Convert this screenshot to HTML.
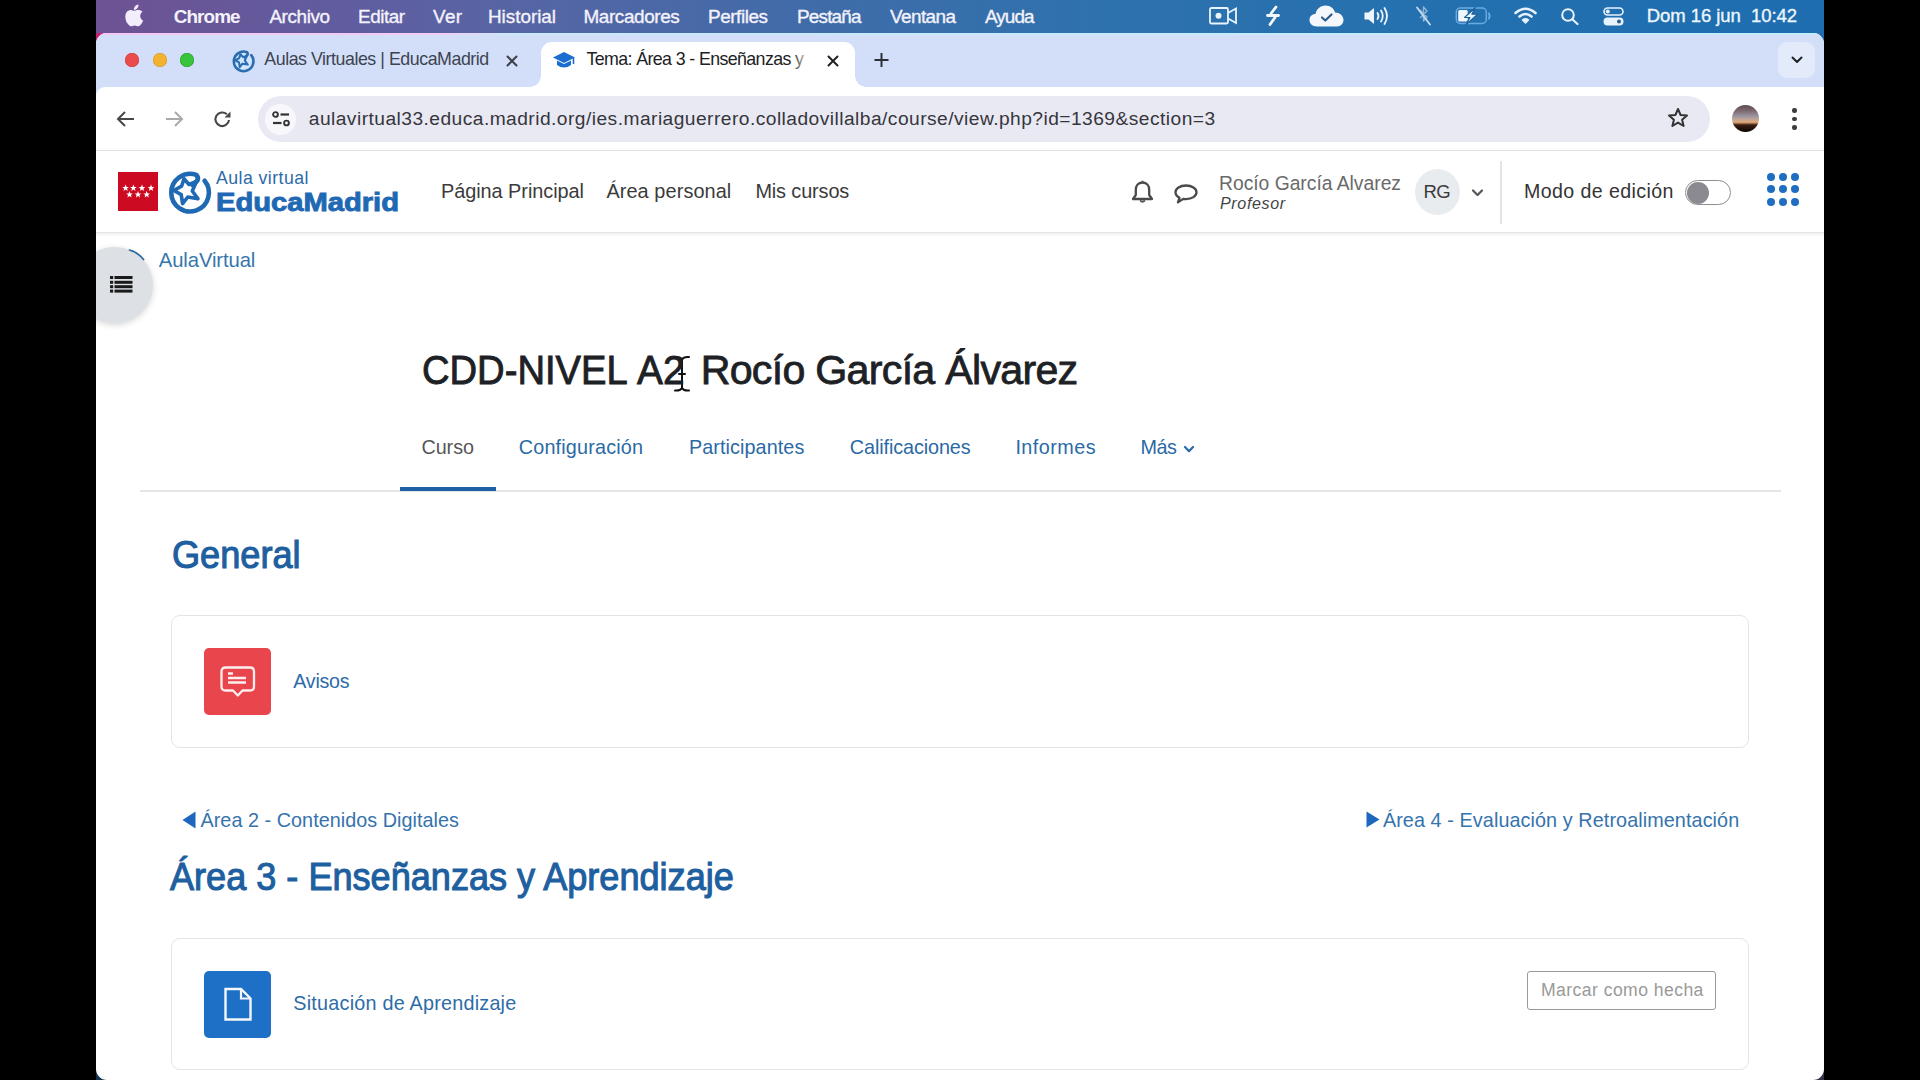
<!DOCTYPE html>
<html><head><meta charset="utf-8"><title>Moodle</title>
<style>
html,body{margin:0;padding:0;}
body{width:1920px;height:1080px;overflow:hidden;background:#000;position:relative;font-family:"Liberation Sans",sans-serif;}
.t{position:absolute;white-space:nowrap;}
.a{position:absolute;}

.dot{position:absolute;border-radius:50%;}
svg{position:absolute;overflow:visible;}

</style></head><body>
<div class="a" style="left:96px;top:0;width:1728px;height:33px;background:linear-gradient(90deg,#6e5293 0%,#5f5da0 15%,#5864a4 23%,#3f6ca9 42%,#2e72ad 58%,#2370af 80%,#1d6db0 100%);"></div>
<div class="a" style="left:96px;top:33px;width:14px;height:14px;background:#c2216a;"></div>
<div class="a" style="left:1810px;top:33px;width:14px;height:14px;background:#1f6aac;"></div>
<div class="a" style="left:96px;top:1062px;width:18px;height:18px;background:#15324c;"></div>
<div class="a" style="left:1806px;top:1062px;width:18px;height:18px;background:#37334d;"></div>
<div class="a" style="left:96px;top:33px;width:1728px;height:1047px;border-radius:11px;background:#fff;overflow:hidden;"><div class="a" style="left:0;top:0;width:1728px;height:64px;background:#d3dff9;"></div><div class="a" style="left:0;top:54px;width:1728px;height:70px;background:#fff;border-top-left-radius:9px;"></div><div class="a" style="left:0;top:0;width:1728px;height:2px;background:linear-gradient(90deg,#f4c8f4 0%,#f2cdf5 20%,#c9e9fb 24%,#c3ecfb 100%);"></div><div class="a" style="left:0;top:117px;width:1728px;height:1px;background:#e2e2e4;"></div><div class="a" style="left:0;top:199px;width:1728px;height:1px;background:#e4e4e4;"></div><div class="a" style="left:0;top:200px;width:1728px;height:3px;background:linear-gradient(#f0f0f0,#fcfcfc);"></div></div>
<svg style="left:125.5px;top:3.5px" width="18" height="22" viewBox="0 0 19 23"><path fill="#f3eefc" d="M13.2 0.5c0.2 1.5-0.4 3-1.3 4-0.9 1-2.3 1.8-3.6 1.7-0.2-1.5 0.5-3 1.3-3.9 0.9-1 2.4-1.7 3.6-1.8zM17.6 8.1c-0.2 0.1-2.7 1.5-2.6 4.5 0 3.5 3.1 4.7 3.1 4.7-0.1 0.2-0.5 1.7-1.6 3.3-1 1.4-2 2.8-3.6 2.8-1.6 0-2-0.9-3.8-0.9-1.8 0-2.3 0.9-3.7 1-1.5 0.1-2.7-1.5-3.7-2.9C-0.3 17.8-1.8 12.6 0.3 9c1-1.8 2.9-2.9 4.9-2.9 1.5 0 3 1 3.9 1 0.9 0 2.5-1.2 4.2-1 0.7 0 2.7 0.3 4.3 2z"/></svg>
<svg style="left:1209px;top:7px" width="29" height="18" viewBox="0 0 29 18"><rect x="1" y="1" width="18" height="15.5" rx="1.5" fill="none" stroke="#e9f4fd" stroke-width="1.8"/><circle cx="9.5" cy="8.8" r="3" fill="#e9f4fd"/><path d="M19 6 L27 1.5 V16 L19 11.5" fill="none" stroke="#e9f4fd" stroke-width="1.8"/></svg>
<svg style="left:1265px;top:5px" width="16" height="22" viewBox="0 0 16 22"><path d="M11 2 L6 8.5 M2.5 10.5 H13.5 M10 12.5 L5 19.5" fill="none" stroke="#f2f8fe" stroke-width="2.8" stroke-linecap="round"/></svg>
<svg style="left:1309px;top:5px" width="35" height="22" viewBox="0 0 35 22"><path fill="#f4f7fb" d="M8 21.5 C3 21.5 0.5 18.5 0.5 15 C0.5 11.5 3 9 6.5 9 C7.5 4 11.5 0.5 16.5 0.5 C21.5 0.5 25 3.5 26 7.5 C30.5 7.5 34.5 10.5 34.5 15 C34.5 18.5 32 21.5 28 21.5 Z"/><path d="M13 12.5 L16.3 15.5 L22.5 9.5" fill="none" stroke="#2a5d8c" stroke-width="2.2" stroke-linecap="round" stroke-linejoin="round"/></svg>
<svg style="left:1364px;top:7px" width="27" height="18" viewBox="0 0 27 18"><path fill="#eef5fc" d="M0.5 5.5 H4.5 L10 1 V17 L4.5 12.5 H0.5 Z"/><path d="M13.5 6 Q15.5 9 13.5 12 M17 3.5 Q20.5 9 17 14.5 M20.5 1 Q25.5 9 20.5 17" fill="none" stroke="#eef5fc" stroke-width="1.8" stroke-linecap="round"/></svg>
<svg style="left:1416px;top:6px" width="15" height="20" viewBox="0 0 15 20"><path d="M4 4 L11 11 L7.5 15 V1 L11 5 L4 12" fill="none" stroke="#8fb6da" stroke-width="1.4" stroke-linejoin="round"/><path d="M1 1.5 L14 18.5" stroke="#c9ddef" stroke-width="1.8" stroke-linecap="round"/></svg>
<svg style="left:1455px;top:7px" width="36" height="18" viewBox="0 0 36 18"><rect x="1.3" y="1" width="30" height="15.5" rx="4" fill="none" stroke="#68aae2" stroke-width="1.5"/><path d="M34 6.5 Q35.3 9 34 11.5" fill="none" stroke="#68aae2" stroke-width="2" stroke-linecap="round"/><rect x="3.2" y="3" width="9.5" height="11.5" rx="1.5" fill="#eef6fd"/><path d="M20.5 0.5 L9.5 10.5 H15 L11 17.5 L22.5 7.3 H16.8 Z" fill="#e9f6fd" stroke="#1b5f96" stroke-width="1.1" stroke-linejoin="round"/></svg>
<svg style="left:1514px;top:7px" width="23" height="17" viewBox="0 0 23 17"><path d="M1.5 6 Q11.5 -2.5 21.5 6" fill="none" stroke="#e7f2fc" stroke-width="2.6" stroke-linecap="round"/><path d="M5.5 9.5 Q11.5 4.5 17.5 9.5" fill="none" stroke="#e7f2fc" stroke-width="2.6" stroke-linecap="round"/><path d="M8.5 13 Q11.5 10.5 14.5 13 L11.5 16 Z" fill="#e7f2fc" stroke="#e7f2fc" stroke-width="1.5" stroke-linejoin="round"/></svg>
<svg style="left:1561px;top:8px" width="19" height="17" viewBox="0 0 19 17"><circle cx="7" cy="7" r="5.8" fill="none" stroke="#e7f2fc" stroke-width="2"/><path d="M11.3 11.3 L16.5 16" stroke="#e7f2fc" stroke-width="2.2" stroke-linecap="round"/></svg>
<svg style="left:1603px;top:7px" width="21" height="19" viewBox="0 0 21 19"><rect x="1" y="1" width="19" height="7" rx="3.5" fill="none" stroke="#e7f2fc" stroke-width="1.6"/><circle cx="4.8" cy="4.5" r="2" fill="#e7f2fc"/><rect x="0.5" y="10.5" width="20" height="8" rx="4" fill="#e7f2fc"/><circle cx="16" cy="14.5" r="2" fill="#2b5f90"/></svg>
<div class="dot" style="left:125px;top:53px;width:14px;height:14px;background:#ec4b4d;box-shadow:inset 0 0 0 0.6px #c63c3c;"></div>
<div class="dot" style="left:152.5px;top:53px;width:14px;height:14px;background:#f2b22f;box-shadow:inset 0 0 0 0.6px #d69a2a;"></div>
<div class="dot" style="left:180px;top:53px;width:14px;height:14px;background:#38c43d;box-shadow:inset 0 0 0 0.6px #2a9f30;"></div>
<svg style="left:227.5px;top:47px" width="28.6" height="27.6" viewBox="0 0 55 53"><circle cx="27.5" cy="26.5" r="17" fill="#cfe6fb"/><path d="M44.6 15.7 A18.8 18.8 0 1 1 36.3 9.9 Q39.5 13.5 36.5 16.5 L32.5 20" fill="none" stroke="#2a6db0" stroke-width="5" stroke-linecap="round"/><path d="M24 13.8 L29 19.5 L36.5 16.5 L32.3 26 L38 33.8 L27.8 32 L22.6 38.6 L21.2 29.6 L13.8 25.5 L21.6 21.2 Z" fill="none" stroke="#2a6db0" stroke-width="4" stroke-linejoin="round"/></svg>
<svg style="left:506px;top:55px" width="12" height="12" viewBox="0 0 12 12"><path d="M1.5 1.5 L10.5 10.5 M10.5 1.5 L1.5 10.5" stroke="#3b3f48" stroke-width="2" stroke-linecap="round"/></svg>
<div class="a" style="left:541px;top:42px;width:314px;height:46px;background:#fff;border-radius:11px 11px 0 0;"></div>
<div class="a" style="left:530px;top:76px;width:11px;height:11px;background:radial-gradient(circle at 0 0,transparent 10.5px,#fff 11px);"></div>
<div class="a" style="left:855px;top:76px;width:11px;height:11px;background:radial-gradient(circle at 100% 0,transparent 10.5px,#fff 11px);"></div>
<svg style="left:552px;top:51px" width="24" height="19" viewBox="0 0 24 19"><path d="M12 1 L23 6.5 L12 12 L1 6.5 Z" fill="#1c6dd0"/><path d="M5 9.5 V14 Q12 19 19 14 V9.5 L12 13 Z" fill="#1c6dd0"/><path d="M21.5 7 V13" stroke="#1c6dd0" stroke-width="1.6"/></svg>
<div class="a" style="left:792px;top:48px;width:22px;height:28px;background:linear-gradient(90deg,rgba(255,255,255,0),#fff 85%);z-index:5;"></div>
<svg style="left:827px;top:55px" width="12" height="12" viewBox="0 0 12 12"><path d="M1.5 1.5 L10.5 10.5 M10.5 1.5 L1.5 10.5" stroke="#202124" stroke-width="2" stroke-linecap="round"/></svg>
<svg style="left:874px;top:52px" width="15" height="16" viewBox="0 0 15 16"><path d="M7.5 1 V15 M0.5 8 H14.5" stroke="#2d3038" stroke-width="2"/></svg>
<div class="a" style="left:1778px;top:42px;width:37px;height:36px;border-radius:9px;background:#e3ebfb;"></div>
<svg style="left:1791px;top:56px" width="12" height="8" viewBox="0 0 12 8"><path d="M1.5 1.5 L6 6 L10.5 1.5" fill="none" stroke="#202124" stroke-width="2" stroke-linecap="round" stroke-linejoin="round"/></svg>
<svg style="left:116px;top:110px" width="19" height="18" viewBox="0 0 19 18"><path d="M18 9 H2.5 M9 2 L2 9 L9 16" fill="none" stroke="#474747" stroke-width="2"/></svg>
<svg style="left:165px;top:110px" width="19" height="18" viewBox="0 0 19 18"><path d="M1 9 H16.5 M10 2 L17 9 L10 16" fill="none" stroke="#a9a9ab" stroke-width="2"/></svg>
<svg style="left:213px;top:110px" width="20" height="19" viewBox="0 0 20 19"><path d="M16 10 A6.8 6.8 0 1 1 13.8 4.2" fill="none" stroke="#474747" stroke-width="2.1"/><path d="M17.5 1.5 V7.5 H11.5 Z" fill="#474747"/></svg>
<div class="a" style="left:258px;top:96px;width:1452px;height:46px;border-radius:23px;background:#e9e9f4;"></div>
<div class="dot" style="left:265px;top:104px;width:31px;height:31px;background:#f8f8fc;"></div>
<svg style="left:272px;top:111px" width="18" height="16" viewBox="0 0 18 16"><circle cx="3.5" cy="3.5" r="2.4" fill="none" stroke="#333" stroke-width="1.9"/><path d="M8.5 3.5 H17" stroke="#333" stroke-width="2.2"/><path d="M1 12 H9.5" stroke="#333" stroke-width="2.2"/><circle cx="14.5" cy="12" r="2.4" fill="none" stroke="#333" stroke-width="1.9"/></svg>
<svg style="left:1667px;top:107px" width="22" height="22" viewBox="0 0 22 22"><path d="M11 2 L13.6 8 L20 8.5 L15.1 12.7 L16.6 19 L11 15.6 L5.4 19 L6.9 12.7 L2 8.5 L8.4 8 Z" fill="none" stroke="#333" stroke-width="2" stroke-linejoin="round"/></svg>
<div class="dot" style="left:1732px;top:105px;width:27px;height:27px;background:linear-gradient(180deg,#5e4a52 0%,#7d6a70 22%,#9c96a2 42%,#c9a890 56%,#e2a878 64%,#3a1d12 74%,#0a0505 100%);"></div>
<div class="dot" style="left:1792px;top:108px;width:4.5px;height:4.5px;background:#3c3c3c;"></div>
<div class="dot" style="left:1792px;top:116.5px;width:4.5px;height:4.5px;background:#3c3c3c;"></div>
<div class="dot" style="left:1792px;top:125px;width:4.5px;height:4.5px;background:#3c3c3c;"></div>
<svg style="left:118px;top:172px" width="40" height="39" viewBox="0 0 40 39"><rect width="40" height="39" fill="#cc0a22"/><path transform="translate(7.6,16)" d="M0 -3.4 L0.95 -1.05 L3.3 -1.05 L1.45 0.4 L2.1 2.9 L0 1.45 L-2.1 2.9 L-1.45 0.4 L-3.3 -1.05 L-0.95 -1.05 Z" fill="#fff"/><path transform="translate(15.4,16)" d="M0 -3.4 L0.95 -1.05 L3.3 -1.05 L1.45 0.4 L2.1 2.9 L0 1.45 L-2.1 2.9 L-1.45 0.4 L-3.3 -1.05 L-0.95 -1.05 Z" fill="#fff"/><path transform="translate(24,16)" d="M0 -3.4 L0.95 -1.05 L3.3 -1.05 L1.45 0.4 L2.1 2.9 L0 1.45 L-2.1 2.9 L-1.45 0.4 L-3.3 -1.05 L-0.95 -1.05 Z" fill="#fff"/><path transform="translate(33,16)" d="M0 -3.4 L0.95 -1.05 L3.3 -1.05 L1.45 0.4 L2.1 2.9 L0 1.45 L-2.1 2.9 L-1.45 0.4 L-3.3 -1.05 L-0.95 -1.05 Z" fill="#fff"/><path transform="translate(11.5,22.5)" d="M0 -3.4 L0.95 -1.05 L3.3 -1.05 L1.45 0.4 L2.1 2.9 L0 1.45 L-2.1 2.9 L-1.45 0.4 L-3.3 -1.05 L-0.95 -1.05 Z" fill="#fff"/><path transform="translate(20,22.5)" d="M0 -3.4 L0.95 -1.05 L3.3 -1.05 L1.45 0.4 L2.1 2.9 L0 1.45 L-2.1 2.9 L-1.45 0.4 L-3.3 -1.05 L-0.95 -1.05 Z" fill="#fff"/><path transform="translate(28.7,22.5)" d="M0 -3.4 L0.95 -1.05 L3.3 -1.05 L1.45 0.4 L2.1 2.9 L0 1.45 L-2.1 2.9 L-1.45 0.4 L-3.3 -1.05 L-0.95 -1.05 Z" fill="#fff"/></svg>
<svg style="left:160px;top:165px" width="55" height="53" viewBox="0 0 55 53"><path d="M44.6 15.7 A18.8 18.8 0 1 1 36.3 9.9 Q39.5 13.5 36.5 16.5 L32.5 20" fill="none" stroke="#1f69b4" stroke-width="4.6" stroke-linecap="round"/><path d="M24 13.8 L29 19.5 L36.5 16.5 L32.3 26 L38 33.8 L27.8 32 L22.6 38.6 L21.2 29.6 L13.8 25.5 L21.6 21.2 Z" fill="none" stroke="#1f69b4" stroke-width="3.6" stroke-linejoin="round"/></svg>
<svg style="left:1131px;top:180px" width="23" height="24" viewBox="0 0 23 24"><path d="M11.5 2.5 C7 2.5 4.8 6 4.8 10 V15 L2 19 H21 L18.2 15 V10 C18.2 6 16 2.5 11.5 2.5 Z" fill="none" stroke="#4a4a4a" stroke-width="2.3" stroke-linejoin="round"/><path d="M9 20.5 Q11.5 23.5 14 20.5" fill="#555" stroke="#555" stroke-width="1.5"/><path d="M11.5 0.8 V2.8" stroke="#555" stroke-width="2"/></svg>
<svg style="left:1174px;top:184px" width="24" height="20" viewBox="0 0 24 20"><path d="M12 1.5 C6 1.5 1.5 4.5 1.5 8.3 C1.5 10.6 3.1 12.5 5.5 13.7 L4 18.3 L9.3 14.9 C10.2 15 11 15.1 12 15.1 C18 15.1 22.5 12.1 22.5 8.3 C22.5 4.5 18 1.5 12 1.5 Z" fill="none" stroke="#4a4a4a" stroke-width="2.3" stroke-linejoin="round"/></svg>
<div class="dot" style="left:1415px;top:169px;width:45px;height:46px;background:#e9ecef;"></div>
<svg style="left:1471px;top:188px" width="13" height="10" viewBox="0 0 13 10"><path d="M2 2.5 L6.5 7 L11 2.5" fill="none" stroke="#555" stroke-width="2.2" stroke-linecap="round" stroke-linejoin="round"/></svg>
<div class="a" style="left:1500px;top:161px;width:1.5px;height:63px;background:#e2e4e8;"></div>
<div class="a" style="left:1685px;top:180px;width:44px;height:23px;border-radius:13px;border:1.6px solid #8e8e93;background:#fff;"></div>
<div class="dot" style="left:1687px;top:182px;width:22px;height:22px;background:#8a8a90;"></div>
<div class="dot" style="left:1767px;top:172.8px;width:8px;height:8px;background:#1f6ec2;"></div>
<div class="dot" style="left:1767px;top:185.3px;width:8px;height:8px;background:#1f6ec2;"></div>
<div class="dot" style="left:1767px;top:197.6px;width:8px;height:8px;background:#1f6ec2;"></div>
<div class="dot" style="left:1779.2px;top:172.8px;width:8px;height:8px;background:#1f6ec2;"></div>
<div class="dot" style="left:1779.2px;top:185.3px;width:8px;height:8px;background:#1f6ec2;"></div>
<div class="dot" style="left:1779.2px;top:197.6px;width:8px;height:8px;background:#1f6ec2;"></div>
<div class="dot" style="left:1791.4px;top:172.8px;width:8px;height:8px;background:#1f6ec2;"></div>
<div class="dot" style="left:1791.4px;top:185.3px;width:8px;height:8px;background:#1f6ec2;"></div>
<div class="dot" style="left:1791.4px;top:197.6px;width:8px;height:8px;background:#1f6ec2;"></div>
<div class="dot" style="left:76px;top:246.5px;width:76.5px;height:76.5px;background:#dde0e5;box-shadow:0 2px 6px rgba(0,0,0,0.16);"></div>
<div class="a" style="left:0;top:230px;width:96px;height:110px;background:#000;"></div>
<svg style="left:110px;top:275px" width="23" height="18" viewBox="0 0 23 18"><g fill="#1a1a1a"><rect x="0" y="1" width="3.2" height="3"/><rect x="4.5" y="1" width="18" height="3"/><rect x="0" y="5.8" width="3.2" height="3"/><rect x="4.5" y="5.8" width="18" height="3"/><rect x="0" y="10.2" width="3.2" height="3"/><rect x="4.5" y="10.2" width="18" height="3"/><rect x="0" y="14.6" width="3.2" height="3"/><rect x="4.5" y="14.6" width="18" height="3"/></g></svg>
<svg style="left:128px;top:248px" width="18" height="14" viewBox="0 0 18 14"><path d="M1.5 2 Q9.5 4 15.5 11.5" fill="none" stroke="#2a679c" stroke-width="1.7" stroke-linecap="round"/></svg>
<svg style="left:672px;top:355px" width="20" height="38" viewBox="0 0 20 38"><g fill="none" stroke-linecap="round"><path d="M3 2 Q8.5 1.5 10 4.5 Q11.5 1.5 17 2 M10 4.5 V33 M3 35.5 Q8.5 36 10 33 Q11.5 36 17 35.5 M6.5 19 H13.5" stroke="#fff" stroke-width="4"/><path d="M3 2 Q8.5 1.5 10 4.5 Q11.5 1.5 17 2 M10 4.5 V33 M3 35.5 Q8.5 36 10 33 Q11.5 36 17 35.5 M7 19 H13" stroke="#111" stroke-width="2"/></g></svg>
<div class="a" style="left:140px;top:490px;width:1641px;height:1.5px;background:#e5e6e8;"></div>
<div class="a" style="left:400px;top:487px;width:96px;height:4px;background:#1f5fa5;"></div>
<svg style="left:1183px;top:445px" width="12" height="9" viewBox="0 0 12 9"><path d="M2 2 L6 6.2 L10 2" fill="none" stroke="#2a6aa6" stroke-width="2.2" stroke-linecap="round" stroke-linejoin="round"/></svg>
<div class="a" style="left:171px;top:615px;width:1576px;height:131px;border:1.5px solid #e4e4e4;border-radius:9px;"></div>
<div class="a" style="left:204px;top:648px;width:67px;height:67px;border-radius:5px;background:#e9454c;"></div>
<svg style="left:220px;top:666px" width="36" height="34" viewBox="0 0 36 34"><path d="M5.5 1.5 H30 Q34 1.5 34 5.5 V20.5 Q34 24.5 30 24.5 H22.5 L17.8 29.5 L13 24.5 H5.5 Q1.5 24.5 1.5 20.5 V5.5 Q1.5 1.5 5.5 1.5 Z" fill="none" stroke="#fdeeee" stroke-width="2.3" stroke-linejoin="round"/><path d="M8 7.5 H13 M8 12 H26 M8 16.5 H26" stroke="#fdeeee" stroke-width="2.3"/></svg>
<svg style="left:182px;top:811px" width="14" height="18" viewBox="0 0 14 18"><path d="M13.5 0.5 V17.5 L0.5 9 Z" fill="#1f67bd"/></svg>
<svg style="left:1366px;top:811px" width="14" height="17" viewBox="0 0 14 17"><path d="M0.5 0.5 V16.5 L13.5 8.5 Z" fill="#1f67bd"/></svg>
<div class="a" style="left:171px;top:937.5px;width:1576px;height:130.5px;border:1.5px solid #e4e4e4;border-radius:9px;"></div>
<div class="a" style="left:204px;top:971px;width:67px;height:67px;border-radius:5px;background:#1e6fc6;"></div>
<svg style="left:223px;top:987px" width="30" height="35" viewBox="0 0 30 35"><path d="M2.5 2 H18 L27.5 11.5 V32.5 H2.5 Z" fill="none" stroke="#f4f8fd" stroke-width="2.4" stroke-linejoin="miter"/><path d="M18 2 V11.5 H27.5" fill="none" stroke="#f4f8fd" stroke-width="2.2"/></svg>
<div class="a" style="left:1527px;top:971px;width:187px;height:37px;border:1.3px solid #9a9a9a;border-radius:3px;"></div>
<div class="t" id="m0" style="left:173.75px;top:7.50px;font-size:18.9px;line-height:18.9px;color:#f4f2fb;font-weight:bold;letter-spacing:-0.905px;">Chrome</div>
<div class="t" id="m1" style="left:269.40px;top:7.50px;font-size:18.9px;line-height:18.9px;color:#f4f2fb;letter-spacing:-0.400px;-webkit-text-stroke:0.35px #f4f2fb;">Archivo</div>
<div class="t" id="m2" style="left:358.00px;top:7.50px;font-size:18.9px;line-height:18.9px;color:#f4f2fb;letter-spacing:-0.472px;-webkit-text-stroke:0.35px #f4f2fb;">Editar</div>
<div class="t" id="m3" style="left:433.00px;top:7.50px;font-size:18.9px;line-height:18.9px;color:#f4f2fb;letter-spacing:0.320px;-webkit-text-stroke:0.35px #f4f2fb;">Ver</div>
<div class="t" id="m4" style="left:488.00px;top:7.50px;font-size:18.9px;line-height:18.9px;color:#f4f2fb;letter-spacing:-0.029px;-webkit-text-stroke:0.35px #f4f2fb;">Historial</div>
<div class="t" id="m5" style="left:583.40px;top:7.50px;font-size:18.9px;line-height:18.9px;color:#f4f2fb;letter-spacing:-0.372px;-webkit-text-stroke:0.35px #f4f2fb;">Marcadores</div>
<div class="t" id="m6" style="left:708.00px;top:7.50px;font-size:18.9px;line-height:18.9px;color:#f4f2fb;letter-spacing:-0.429px;-webkit-text-stroke:0.35px #f4f2fb;">Perfiles</div>
<div class="t" id="m7" style="left:797.00px;top:7.50px;font-size:18.9px;line-height:18.9px;color:#f4f2fb;letter-spacing:-0.805px;-webkit-text-stroke:0.35px #f4f2fb;">Pestaña</div>
<div class="t" id="m8" style="left:890.00px;top:7.50px;font-size:18.9px;line-height:18.9px;color:#f4f2fb;letter-spacing:-0.557px;-webkit-text-stroke:0.35px #f4f2fb;">Ventana</div>
<div class="t" id="m9" style="left:985.00px;top:7.50px;font-size:18.9px;line-height:18.9px;color:#f4f2fb;letter-spacing:-0.934px;-webkit-text-stroke:0.35px #f4f2fb;">Ayuda</div>
<div class="t" id="md" style="left:1646.70px;top:6.64px;font-size:18.5px;line-height:18.5px;color:#eef6fd;letter-spacing:-0.055px;-webkit-text-stroke:0.35px #eef6fd;">Dom 16 jun&nbsp;&nbsp;10:42</div>
<div class="t" id="tb1" style="left:264.30px;top:50.83px;font-size:17.8px;line-height:17.8px;color:#3d4350;letter-spacing:-0.452px;">Aulas Virtuales | EducaMadrid</div>
<div class="t" id="tb2" style="left:586.40px;top:50.63px;font-size:17.8px;line-height:17.8px;color:#202124;letter-spacing:-0.602px;">Tema: Área 3 - Enseñanzas y</div>
<div class="t" id="url" style="left:308.75px;top:108.99px;font-size:19.2px;line-height:19.2px;color:#36363b;letter-spacing:0.459px;">aulavirtual33.educa.madrid.org/ies.mariaguerrero.colladovillalba/course/view.php?id=1369&amp;section=3</div>
<div class="t" id="lg1" style="left:216.00px;top:169.71px;font-size:17.7px;line-height:17.7px;color:#2d6ba8;letter-spacing:0.445px;">Aula virtual</div>
<div class="t" id="lg2" style="left:216.00px;top:188.62px;font-size:26.2px;line-height:26.2px;color:#1f69b4;font-weight:bold;transform:scaleX(1.1129);transform-origin:0 0;-webkit-text-stroke:0.9px #1f69b4;">EducaMadrid</div>
<div class="t" id="n1" style="left:441.00px;top:181.75px;font-size:19.9px;line-height:19.9px;color:#3b3b3b;letter-spacing:-0.050px;">Página Principal</div>
<div class="t" id="n2" style="left:606.40px;top:181.75px;font-size:19.9px;line-height:19.9px;color:#3b3b3b;letter-spacing:0.088px;">Área personal</div>
<div class="t" id="n3" style="left:755.40px;top:181.75px;font-size:19.9px;line-height:19.9px;color:#3b3b3b;letter-spacing:-0.127px;">Mis cursos</div>
<div class="t" id="u1" style="left:1219.00px;top:173.66px;font-size:19.3px;line-height:19.3px;color:#6a6a6a;letter-spacing:-0.010px;">Rocío García Alvarez</div>
<div class="t" id="u2" style="left:1220.00px;top:194.87px;font-size:16.1px;line-height:16.1px;color:#454545;font-style:italic;letter-spacing:0.625px;">Profesor</div>
<div class="t" id="rg" style="left:1423.50px;top:182.94px;font-size:18.5px;line-height:18.5px;color:#3a3a3a;letter-spacing:-0.6px;">RG</div>
<div class="t" id="ed" style="left:1524.00px;top:181.50px;font-size:19.6px;line-height:19.6px;color:#343434;letter-spacing:0.407px;">Modo de edición</div>
<div class="t" id="bc" style="left:158.80px;top:249.71px;font-size:20.3px;line-height:20.3px;color:#3676ad;letter-spacing:-0.122px;">AulaVirtual</div>
<div class="t" id="h1a" style="left:421.80px;top:350.12px;font-size:41.2px;line-height:41.2px;color:#1d2125;transform:scaleX(0.9266);transform-origin:0 0;-webkit-text-stroke:0.9px #1d2125;">CDD-NIVEL</div>
<div class="t" id="h1b" style="left:637.00px;top:350.12px;font-size:41.2px;line-height:41.2px;color:#1d2125;transform:scaleX(0.9426);transform-origin:0 0;-webkit-text-stroke:0.9px #1d2125;">A2</div>
<div class="t" id="h1c" style="left:700.70px;top:350.12px;font-size:41.2px;line-height:41.2px;color:#1d2125;letter-spacing:-0.734px;-webkit-text-stroke:0.8px #1d2125;">Rocío García Álvarez</div>
<div class="t" id="c1" style="left:421.40px;top:437.94px;font-size:19.8px;line-height:19.8px;color:#575757;letter-spacing:-0.045px;">Curso</div>
<div class="t" id="c2" style="left:518.80px;top:437.94px;font-size:19.8px;line-height:19.8px;color:#2b6aa5;letter-spacing:0.178px;">Configuración</div>
<div class="t" id="c3" style="left:689.00px;top:437.94px;font-size:19.8px;line-height:19.8px;color:#2b6aa5;letter-spacing:0.078px;">Participantes</div>
<div class="t" id="c4" style="left:849.80px;top:437.94px;font-size:19.8px;line-height:19.8px;color:#2b6aa5;letter-spacing:-0.096px;">Calificaciones</div>
<div class="t" id="c5" style="left:1015.40px;top:437.94px;font-size:19.8px;line-height:19.8px;color:#2b6aa5;letter-spacing:0.464px;">Informes</div>
<div class="t" id="c6" style="left:1140.40px;top:437.94px;font-size:19.8px;line-height:19.8px;color:#2b6aa5;letter-spacing:-0.438px;">Más</div>
<div class="t" id="g1" style="left:171.70px;top:536.41px;font-size:38.2px;line-height:38.2px;color:#1e5f9f;transform:scaleX(0.9462);transform-origin:0 0;-webkit-text-stroke:1.1px #1e5f9f;">General</div>
<div class="t" id="av" style="left:293.30px;top:671.50px;font-size:19.6px;line-height:19.6px;color:#2d6ca8;letter-spacing:-0.212px;">Avisos</div>
<div class="t" id="pv" style="left:200.50px;top:810.54px;font-size:19.8px;line-height:19.8px;color:#3573ad;letter-spacing:0.043px;">Área 2 - Contenidos Digitales</div>
<div class="t" id="nx" style="left:1382.90px;top:810.54px;font-size:19.8px;line-height:19.8px;color:#3573ad;letter-spacing:0.088px;">Área 4 - Evaluación y Retroalimentación</div>
<div class="t" id="g2" style="left:170.20px;top:857.96px;font-size:38.2px;line-height:38.2px;color:#1e5f9f;transform:scaleX(0.9452);transform-origin:0 0;-webkit-text-stroke:1.1px #1e5f9f;">Área 3 - Enseñanzas y Aprendizaje</div>
<div class="t" id="sa" style="left:293.30px;top:993.64px;font-size:19.8px;line-height:19.8px;color:#2d6ca8;letter-spacing:0.226px;">Situación de Aprendizaje</div>
<div class="t" id="mk" style="left:1541.00px;top:982.00px;font-size:17.6px;line-height:17.6px;color:#9a9a9a;letter-spacing:0.432px;">Marcar como hecha</div>
</body></html>
